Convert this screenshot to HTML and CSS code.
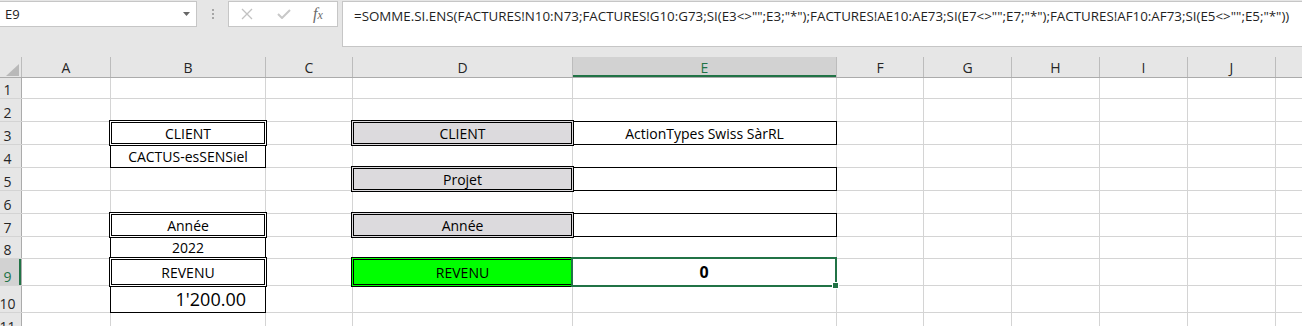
FILE: index.html
```html
<!DOCTYPE html>
<html lang="fr">
<head>
    <meta charset="UTF-8">
    <meta name="viewport" content="width=device-width, initial-scale=1.0">
    <title>Revenu client</title>
    <link rel="stylesheet" href="styles.css">
</head>
<body>

    <div class="formula-bar">
        <div class="name-box">
            <span>E9</span>
            <svg width="7" height="4" viewBox="0 0 7 4"><polygon points="0,0 7,0 3.5,4" fill="#666"/></svg>
        </div>
        <div class="grip"><i></i><i></i><i></i></div>
        <div class="fx-box">
            <svg class="cancel" width="12" height="12" viewBox="0 0 12 12"><path d="M1 1 L11 11 M11 1 L1 11" stroke="#c2c2c2" stroke-width="1.3" fill="none"/></svg>
            <svg class="enter" width="14" height="10" viewBox="0 0 14 10"><path d="M1 5 L5 9 L13 1" stroke="#c8c8c8" stroke-width="2" fill="none"/></svg>
            <span class="fx">f<em>x</em></span>
        </div>
        <div class="formula">=SOMME.SI.ENS(FACTURES!N10:N73;FACTURES!G10:G73;SI(E3&lt;&gt;"";E3;"*");FACTURES!AE10:AE73;SI(E7&lt;&gt;"";E7;"*");FACTURES!AF10:AF73;SI(E5&lt;&gt;"";E5;"*"))</div>
    </div>

    <div class="sheet">
        <div class="row head">
            <div class="corner"><svg width="13" height="12" viewBox="0 0 13 12"><polygon points="13,0 13,12 0,12" fill="#b9b9b9"/></svg></div>
            <div>A</div><div>B</div><div>C</div><div>D</div><div class="on">E</div>
            <div>F</div><div>G</div><div>H</div><div>I</div><div>J</div><div></div>
        </div>
        <div class="row r1">
            <div class="rh">1</div><div></div><div></div><div></div><div></div><div></div>
            <div></div><div></div><div></div><div></div><div></div><div></div>
        </div>
        <div class="row r2">
            <div class="rh">2</div><div></div><div></div><div></div><div></div><div></div>
            <div></div><div></div><div></div><div></div><div></div><div></div>
        </div>
        <div class="row r3">
            <div class="rh">3</div><div></div>
            <div class="dbl">CLIENT</div><div></div>
            <div class="dbl gray">CLIENT</div>
            <div class="box">ActionTypes Swiss SàrRL</div>
            <div></div><div></div><div></div><div></div><div></div><div></div>
        </div>
        <div class="row r4">
            <div class="rh">4</div><div></div>
            <div class="box">CACTUS-esSENSiel</div>
            <div></div><div></div><div></div>
            <div></div><div></div><div></div><div></div><div></div><div></div>
        </div>
        <div class="row r5">
            <div class="rh">5</div><div></div><div></div><div></div>
            <div class="dbl gray">Projet</div>
            <div class="box"></div>
            <div></div><div></div><div></div><div></div><div></div><div></div>
        </div>
        <div class="row r6">
            <div class="rh">6</div><div></div><div></div><div></div><div></div><div></div>
            <div></div><div></div><div></div><div></div><div></div><div></div>
        </div>
        <div class="row r7">
            <div class="rh">7</div><div></div>
            <div class="dbl">Année</div><div></div>
            <div class="dbl gray">Année</div>
            <div class="box"></div>
            <div></div><div></div><div></div><div></div><div></div><div></div>
        </div>
        <div class="row r8">
            <div class="rh">8</div><div></div>
            <div class="box">2022</div>
            <div></div><div></div><div></div>
            <div></div><div></div><div></div><div></div><div></div><div></div>
        </div>
        <div class="row r9">
            <div class="rh on">9</div><div></div>
            <div class="dbl">REVENU</div><div></div>
            <div class="dbl green">REVENU</div>
            <div class="sel"><b>0</b></div>
            <div></div><div></div><div></div><div></div><div></div><div></div>
        </div>
        <div class="row r10">
            <div class="rh">10</div><div></div>
            <div class="box amount">1'200.00</div>
            <div></div><div></div><div></div>
            <div></div><div></div><div></div><div></div><div></div><div></div>
        </div>
        <div class="row r11">
            <div class="rh">11</div><div></div><div></div><div></div><div></div><div></div>
            <div></div><div></div><div></div><div></div><div></div><div></div>
        </div>
    </div>

</body>
</html>
```

FILE: styles.css
```css
body { margin: 0; height: 326px; overflow: hidden; background: #e6e6e6; font-family: "Open Sans", "Liberation Sans", sans-serif; font-size: 14px; color: #000; }

/* barre de formule */
.formula-bar { height: 57px; display: flex; align-items: flex-start; padding-top: 1px; box-sizing: border-box; }
.name-box { width: 197px; height: 26px; box-sizing: border-box; background: #fff; border: 1px solid #c6c6c6; border-left: none; display: flex; align-items: center; justify-content: space-between; padding: 0 6px 0 5px; font-size: 13px; color: #222; }
.grip { width: 31px; height: 26px; display: flex; flex-direction: column; align-items: center; justify-content: center; gap: 2px; }
.grip i { width: 2px; height: 2px; background: #a6a6a6; }
.fx-box { width: 110px; height: 26px; box-sizing: border-box; background: #fff; border: 1px solid #c6c6c6; display: flex; align-items: center; }
.fx-box .cancel { margin-left: 12px; }
.fx-box .enter { margin-left: 24px; }
.fx { margin-left: 22px; font-family: "Liberation Serif", serif; font-style: italic; font-size: 16px; color: #6b6b6b; line-height: 1; }
.fx em { font-size: 12px; }
.formula { flex: 1; min-width: 0; height: 46px; margin-left: 4px; box-sizing: border-box; background: #fff; border: 1px solid #c6c6c6; border-right: none; padding: 5px 0 0 11px; font-size: 13.35px; white-space: nowrap; overflow: hidden; color: #1f1f1f; }

/* grille */
.sheet { background: #fff; }
.row { display: grid; grid-template-columns: 21px 88px 154px 86px 219px 263px 86px 87px 87px 87px 87px 1fr; column-gap: 1px; background: #d4d4d4; border-bottom: 1px solid #d4d4d4; box-sizing: border-box; }
.row > div { background: #fff; display: flex; align-items: center; justify-content: center; white-space: nowrap; min-width: 0; }
.r1 { height: 21px; }
.r2, .r3, .r4, .r5, .r6, .r7 { height: 23px; }
.r8 { height: 22px; }
.r9, .r10 { height: 27px; }
.r11 { height: 23px; }

.head { height: 21px; background: #bcbcbc; border-bottom-color: #ababab; }
.head > div { background: #e6e6e6; color: #262626; }
.head .corner { justify-content: flex-end; align-items: flex-end; padding: 0 2px 1px 0; }
.head .on { background: #d2d2d2; color: #217346; box-shadow: inset 0 -2px 0 #217346; }

.row .rh { background: #e6e6e6; color: #262626; align-items: flex-end; padding-right: 6px; line-height: 17px; box-shadow: 1px 0 0 #ababab; }
.row .rh.on { background: #d2d2d2; color: #217346; box-shadow: inset -2px 0 0 #217346, 1px 0 0 #ababab; }

/* bordures des cellules */
.row .box { margin: -1px; border: 1px solid #000; }
.row .dbl { margin: -2px; border: 3px double #000; position: relative; }
.row .gray { background: #dcdadd; }
.row .green { background: #00ff00; }
.row .amount { justify-content: flex-end; padding-right: 19px; font-size: 18px; }

.row .sel { margin: -2px -1px -2px -2px; border: 2px solid #217346; position: relative; font-size: 16px; }
.sel::after { content: ""; position: absolute; right: -4px; bottom: -4px; width: 5px; height: 5px; background: #217346; border: 1px solid #fff; }
```
